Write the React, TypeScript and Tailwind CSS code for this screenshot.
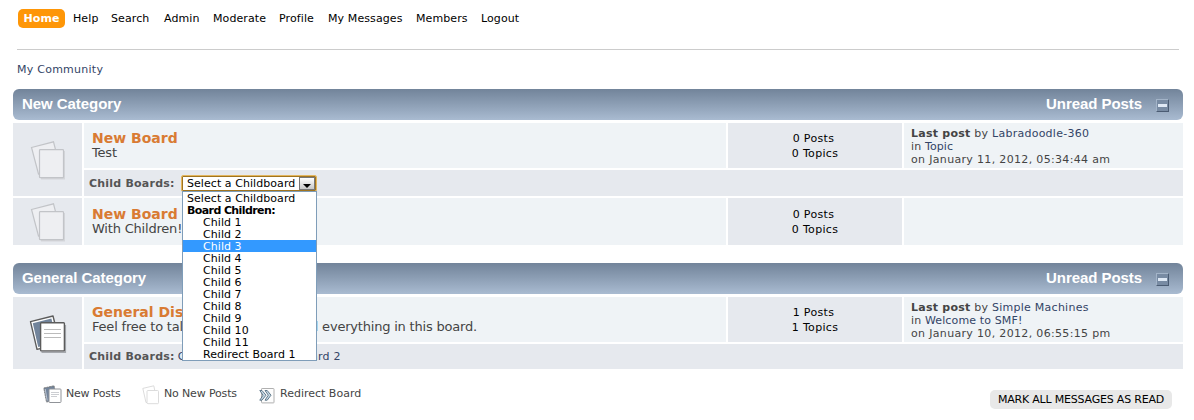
import React, { useState } from 'react';

const navItems = [
  { name: 'Help', width: 'w-[38px]' },
  { name: 'Search', width: 'w-[53px]' },
  { name: 'Admin', width: 'w-[49px]' },
  { name: 'Moderate', width: 'w-[66px]' },
  { name: 'Profile', width: 'w-[49px]' },
  { name: 'My Messages', width: 'w-[88px]' },
  { name: 'Members', width: 'w-[65px]' },
  { name: 'Logout', width: 'w-[50px]' },
];

const childOptions = [
  'Child 1', 'Child 2', 'Child 3', 'Child 4', 'Child 5', 'Child 6', 'Child 7',
  'Child 8', 'Child 9', 'Child 10', 'Child 11', 'Redirect Board 1',
];

const BoardOffIcon = () => (
  <svg width="36" height="40" viewBox="0 0 36 40" fill="#eeeff2" stroke="#c2c4c8" strokeWidth="1.2">
    <path d="M1.5 7.5 L23.5 1.8 L31 31 L8.5 34 Z" />
    <path d="M11 38.7 H34.2 V11" fill="none" stroke="#d3d5d9" strokeWidth="1.5" />
    <rect x="9.5" y="9.7" width="24" height="28" rx="0.8" />
  </svg>
);

const BoardOnIcon = () => (
  <svg width="38" height="40" viewBox="0 0 38 40">
    <path d="M1.5 7.6 L24 2 L31 30 L8 35.4 Z" fill="#fff" stroke="#5c5c5c" strokeWidth="1.4" strokeLinejoin="round" />
    <path d="M3.8 9.2 L22.4 4.6 L28 28 L9.2 33 Z" fill="#72849b" />
    <path d="M12.5 38.3 H36.3 V11" fill="none" stroke="#a5a8ad" strokeWidth="1.6" />
    <rect x="11.6" y="8.7" width="23.8" height="28.2" rx="0.8" fill="#fff" stroke="#5c5c5c" strokeWidth="1.4" />
    <path d="M15 15.5 H32 M15 19.5 H32 M15 23.5 H32" stroke="#bbb" />
  </svg>
);

const SmallOnIcon = () => (
  <svg width="19" height="19" viewBox="0 0 19 19">
    <path d="M0.8 3 L11 0.8 L14 15 L3.5 17 Z" fill="#72849b" stroke="#777" strokeWidth="0.9" strokeDasharray="2 0.6" />
    <path d="M2.2 4 L4.2 15.5" stroke="#dce1e8" strokeWidth="0.7" />
    <rect x="6" y="4" width="12" height="13.5" rx="0.8" fill="#fff" stroke="#909398" />
    <path d="M8 7.5 H16 M8 9.5 H16 M8 11.5 H14" stroke="#bfc1c6" strokeWidth="0.8" />
  </svg>
);

const SmallOffIcon = () => (
  <svg width="18" height="20" viewBox="0 0 18 20" fill="#fff" stroke="#d8d8d8" strokeWidth="0.9">
    <path d="M0.8 3.4 L11.8 0.8 L15 16 L4 17.5 Z" />
    <rect x="5" y="5.5" width="11.5" height="13.2" rx="1" />
  </svg>
);

const RedirectIcon = () => (
  <svg width="16" height="16" viewBox="0 0 16 16">
    <rect x="2.5" y="0.5" width="12.5" height="14.4" rx="0.6" fill="#fdfdfd" stroke="#b0b0b0" />
    <path d="M0.8 2.5 H3 L7 7.2 L3 12.2 H0.8 L4 7.2 Z M6 2.5 H8.2 L12 7.2 L8.2 12.2 H6 L9.3 7.2 Z" fill="#c7dae6" stroke="#526e80" strokeWidth="0.9" />
  </svg>
);

const CategoryBar = ({ title }: { title: string }) => (
  <div className="flex h-[31px] items-center rounded-[6px] bg-linear-to-b from-[#72849a] to-[#a9bbd1] pr-[14px] pb-px pl-[9px] font-['Liberation_Sans',Arial,sans-serif] text-[15px] font-bold tracking-[-0.06px] text-white">
    <span>{title}</span>
    <span className="ml-auto">Unread Posts</span>
    <span className="mt-[3px] ml-[14px] flex size-[13px] items-center justify-center border border-t-[#a3b4c8] border-r-[#4b5c73] border-b-[#4b5c73] border-l-[#a3b4c8] bg-[#788ba3]">
      <span className="h-[3px] w-[9px] bg-[#dfe9f5]" />
    </span>
  </div>
);

const Stats = ({ posts, topics }: { posts: number; topics: number }) => (
  <div className="flex flex-col justify-center bg-[#e6e9ee] text-center text-[11px] leading-[15px] tracking-[0.33px] text-black">
    <span className="pr-[3px]">{posts} Posts</span>
    <span>{topics} Topics</span>
  </div>
);

const LastPost = ({ user, topic, date }: { user: string; topic: string; date: string }) => (
  <div className="bg-[#eff3f6] pt-[4px] pl-[7px] text-[11px] leading-[13px] whitespace-nowrap text-[#444]">
    <div className="tracking-[0.25px]"><b>Last post</b> by <a className="text-[#334466]">{user}</a></div>
    <div className="tracking-[0.13px]">in <a className="text-[#334466]">{topic}</a></div>
    <div className="tracking-[0.33px]">on {date}</div>
  </div>
);

const BoardInfo = ({ name, text }: { name: string; text: string }) => (
  <div className="bg-[#eff3f6] pl-[8px] whitespace-nowrap">
    <div className="text-[14px] leading-[16px] font-bold text-[#d97b33]">{name}</div>
    <div className="text-[13px] leading-[14px] tracking-[-0.2px] text-[#444]">{text}</div>
  </div>
);

const ChildSelect = () => {
  const [active, setActive] = useState('Child 3');

  return (
    <div className="relative h-[17px] w-[136px] text-[11px] tracking-[0.06px] text-black">
      <div className="flex h-[17px] items-center rounded-[2px] border border-[#e3b65f] bg-white pr-px pl-[5px] inset-shadow-[0_0_0_1px_#a0741f]">
        <span className="pt-px leading-[13px] whitespace-nowrap">Select a Childboard</span>
        <span className="ml-auto flex h-[13px] w-[16px] items-end justify-center border border-[#777] bg-linear-to-b from-white to-[#c8c8c8] pb-px">
          <svg width="8" height="4" viewBox="0 0 8 4"><path d="M0 0 H8 L4 4 Z" /></svg>
        </span>
      </div>
      <div className="absolute top-[16px] left-px z-10 h-[170px] w-[135px] border border-[#7f9db9] bg-white leading-[14px] whitespace-nowrap">
        <div className="h-[12px] pl-[4px]">Select a Childboard</div>
        <div className="h-[12px] pl-[4px] font-bold tracking-[-0.6px]">Board Children:</div>
        {childOptions.map((option) => (
          <div
            key={option}
            className={`h-[12px] pl-[20px] ${active === option ? 'bg-[#3399ff] text-white' : ''}`}
            onMouseEnter={() => setActive(option)}
          >
            {option}
          </div>
        ))}
      </div>
    </div>
  );
};

const App = () => (
  <div className="h-[420px] w-[1194px] overflow-hidden bg-white pl-[13px] font-['DejaVu_Sans',Verdana,sans-serif]">
    <div className="w-[1170px]">
      <div className="mr-[4px] ml-[4px] flex h-[50px] items-start border-b border-[#ccc] pt-[9px] text-[11px] text-black">
        <span className="ml-px flex h-[19px] w-[47px] items-center justify-center rounded-[5px] bg-[#fe9607] pt-[2px] font-bold tracking-[0.1px] text-white">Home</span>
        <div className="ml-[8px] flex h-[19px] items-center pt-[2px] tracking-[0.1px]">
          {navItems.map((item) => (
            <a key={item.name} className={`whitespace-nowrap ${item.width}`}>{item.name}</a>
          ))}
        </div>
      </div>
      <div className="h-[39px] pt-[12px] pl-[4px] text-[11px] leading-[16px] tracking-[0.25px] text-[#334466]">My Community</div>

      <CategoryBar title="New Category" />
      <div className="mt-[3px] grid grid-cols-[69px_642px_174px_279px] grid-rows-[45px_26px_47px] gap-[2px]">
        <div className="row-span-2 flex justify-center bg-[#e6e9ee] pt-[17px]"><BoardOffIcon /></div>
        <div className="bg-[#eff3f6] pt-[7px]"><BoardInfo name="New Board" text="Test" /></div>
        <Stats posts={0} topics={0} />
        <LastPost user="Labradoodle-360" topic="Topic" date="January 11, 2012, 05:34:44 am" />
        <div className="col-span-3 flex items-center bg-[#e6e9ee] pl-[5px] text-[11px] text-[#555]">
          <b className="w-[92px] pt-[2px] tracking-[0.22px]">Child Boards:</b>
          <ChildSelect />
        </div>
        <div className="flex justify-center bg-[#e6e9ee] pt-[4px]"><BoardOffIcon /></div>
        <div className="bg-[#eff3f6] pt-[8px]"><BoardInfo name="New Board" text="With Children!" /></div>
        <Stats posts={0} topics={0} />
        <div className="bg-[#eff3f6]" />
      </div>

      <div className="mt-[18px]">
        <CategoryBar title="General Category" />
      </div>
      <div className="mt-[3px] grid grid-cols-[69px_642px_174px_279px] grid-rows-[45px_25px] gap-[2px]">
        <div className="row-span-2 flex justify-center bg-[#e6e9ee] pt-[17px]"><BoardOnIcon /></div>
        <div className="bg-[#eff3f6] pt-[7px]"><BoardInfo name="General Discussion" text="Feel free to talk about anything and everything in this board." /></div>
        <Stats posts={1} topics={1} />
        <LastPost user="Simple Machines" topic="Welcome to SMF!" date="January 10, 2012, 06:55:15 pm" />
        <div className="col-span-3 flex items-center bg-[#e6e9ee] pt-[2px] pl-[5px] text-[11px] text-[#555]">
          <b className="tracking-[0.22px]">Child Boards:</b>
          <span className="ml-[3px] tracking-[0.29px] text-[#334466]">Child Board 1, Child Board 2</span>
        </div>
      </div>

      <div className="flex items-start pt-[16px] pl-[30px] text-[11px] leading-[18px] text-[#444]">
        <div className="flex w-[99px] gap-[4px] tracking-[-0.2px] whitespace-nowrap"><SmallOnIcon />New Posts</div>
        <div className="flex w-[117px] gap-[4px] tracking-[-0.15px] whitespace-nowrap"><SmallOffIcon />No New Posts</div>
        <div className="flex gap-[5px] whitespace-nowrap"><span className="pt-[3px]"><RedirectIcon /></span>Redirect Board</div>
        <button className="mt-[5px] mr-[11px] ml-auto h-[19px] w-[182px] rounded-[5px] bg-[#e8e8e8] text-[11px] leading-[19px] tracking-[-0.2px] whitespace-nowrap text-black uppercase">Mark all messages as read</button>
      </div>
    </div>
  </div>
);

export default App;
